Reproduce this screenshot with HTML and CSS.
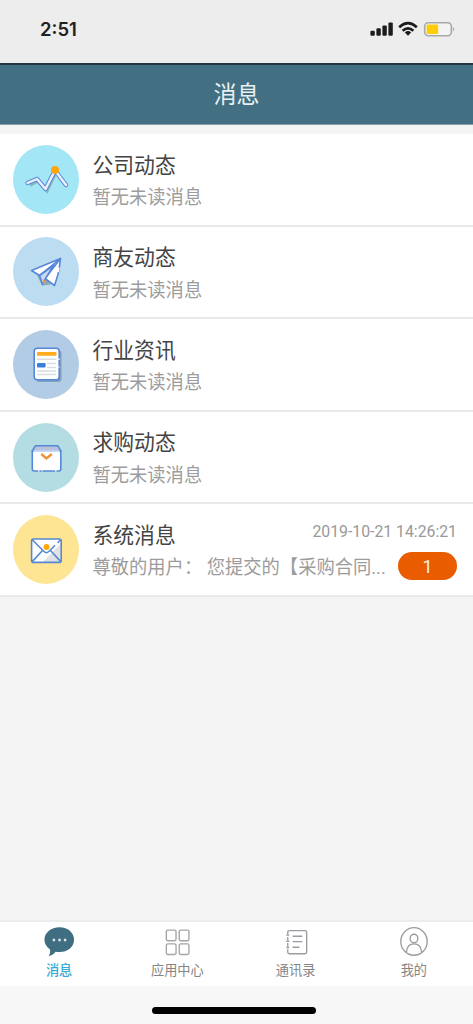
FILE: index.html
```html
<!DOCTYPE html>
<html lang="zh-CN">
  <head>
    <meta charset="utf-8" />
    <title>消息</title>
    <link rel="stylesheet" href="styles.css">
  </head>
  <body>
    <div class="status-bar">
      <span class="time">2:51</span>
      <svg class="status-icons" width="86" height="16" viewBox="0 0 86 16">
        <g fill="#1c1c1c">
          <rect x="0.4" y="9.8" width="4.4" height="5" rx="1.2" />
          <rect x="6.4" y="7.2" width="4.4" height="7.6" rx="1.2" />
          <rect x="12.4" y="4.4" width="4.4" height="10.4" rx="1.2" />
          <rect x="18.4" y="1.4" width="4.4" height="13.4" rx="1.2" />
        </g>
        <g fill="none" stroke="#1c1c1c" stroke-width="2.6">
          <path d="M29.2 6.2 Q38 -1.8 46.8 6.2" />
          <path d="M32.6 9.8 Q38 4.8 43.4 9.8" />
        </g>
        <path d="M34.8 11.4 Q38 8.8 41.2 11.4 L38 14.8 Z" fill="#1c1c1c" />
        <rect x="54.7" y="1.7" width="26.6" height="13" rx="3.6" fill="#f3f3f3" stroke="#a9a9a9" stroke-width="1.6" />
        <rect x="56.6" y="3.6" width="11.6" height="9.4" rx="1.4" fill="#ffcc0a" />
        <path d="M82.8 5.8 Q85.6 8.2 82.8 10.6 Z" fill="#a9a9a9" />
      </svg>
    </div>

    <header class="header"><h1>消息</h1></header>

    <main class="list">
      <div class="item">
        <svg class="avatar" width="66" height="69" viewBox="0 0 66 69">
          <ellipse cx="33" cy="34.5" rx="33" ry="34.5" fill="#a3e6f5" />
          <path d="M17 40.5 L25 36 L34 46 L43 27.5 L53 41" fill="none" stroke="#86b8bd" stroke-width="3" />
          <g fill="none" stroke-linecap="round" stroke-linejoin="round">
            <path d="M14.5 38 L24 34 L32.5 44 L42 25.5 L53 40" stroke="#5889db" stroke-width="4.4" />
            <path d="M14.5 38 L24 34 L32.5 44 L42 25.5 L53 40" stroke="#eef2fc" stroke-width="2.4" />
          </g>
          <circle cx="42" cy="25" r="4" fill="#ffa60e" />
        </svg>
        <div class="info">
          <div class="line"><span class="name">公司动态</span></div>
          <div class="line"><span class="desc">暂无未读消息</span></div>
        </div>
      </div>

      <div class="item">
        <svg class="avatar" width="66" height="69" viewBox="0 0 66 69">
          <ellipse cx="33" cy="34.5" rx="33" ry="34.5" fill="#bcdcf2" />
          <path d="M24 38 L29 48.5 L38 47.5 L31 41 Z" fill="#8caab5" />
          <g fill="#fff" stroke="#5588d8" stroke-width="1.6" stroke-linejoin="round">
            <path d="M47.5 21.5 L18.5 33.5 L26.5 38.5 Z" />
            <path d="M47.5 21.5 L32 41.5 L41.5 48.5 L44.5 39 L46 33 Z" />
            <path d="M41 28 L26.5 38.5 L29.5 47.5 L32.5 41.5 Z" fill="#cbd9f2" />
          </g>
          <path d="M45.7 30.5 L44.9 35" stroke="#fff" stroke-width="2" />
          <path d="M29.5 42 L33 44 L30 47 Z" fill="#f59a3b" />
        </svg>
        <div class="info">
          <div class="line"><span class="name">商友动态</span></div>
          <div class="line"><span class="desc">暂无未读消息</span></div>
        </div>
      </div>

      <div class="item">
        <svg class="avatar" width="66" height="69" viewBox="0 0 66 69">
          <ellipse cx="33" cy="34.5" rx="33" ry="34.5" fill="#b2cce5" />
          <rect x="23" y="20" width="25.5" height="32" rx="3.5" fill="#829fbb" />
          <rect x="21.2" y="18.3" width="25" height="31.4" rx="3" fill="#fff" stroke="#5588d8" stroke-width="1.6" />
          <rect x="24" y="22" width="19.5" height="3.8" rx="0.8" fill="#ffab1c" />
          <path d="M24 29.2 H43.5 M34 33.5 H43 M34 37.5 H43 M24 41 H43 M24 44.5 H43" stroke="#d9dde2" stroke-width="1.5" />
          <rect x="24" y="33" width="8.6" height="4.4" rx="1" fill="#3c7edc" />
          <path d="M46 28.5 V30 M46 36.5 V37.500" stroke="#fff" stroke-width="1.4" />
        </svg>
        <div class="info">
          <div class="line"><span class="name">行业资讯</span></div>
          <div class="line"><span class="desc">暂无未读消息</span></div>
        </div>
      </div>

      <div class="item">
        <svg class="avatar" width="66" height="69" viewBox="0 0 66 69">
          <ellipse cx="33" cy="34.5" rx="33" ry="34.5" fill="#b4dde3" />
          <path d="M19.3 28 L22.3 22.8 H44.8 L47.8 28 Z" fill="#b9c2dc" stroke="#5588d8" stroke-width="1.6" stroke-linejoin="round" />
          <path d="M19.3 28 H47.8 V46 Q47.8 48 45.8 48 H21.3 Q19.3 48 19.3 46 Z" fill="#fff" stroke="#5588d8" stroke-width="1.6" />
          <path d="M20.5 28 H46.6" stroke="#fff" stroke-width="1.2" />
          <path d="M25 47.8 H26.5 M28.5 47.8 H29.5 M42 47.8 H43.5" stroke="#fff" stroke-width="1.4" />
          <path d="M28.2 31 L33.5 35.5 L38.8 31" fill="none" stroke="#ee9235" stroke-width="2.3" />
        </svg>
        <div class="info">
          <div class="line"><span class="name">求购动态</span></div>
          <div class="line"><span class="desc">暂无未读消息</span></div>
        </div>
      </div>

      <div class="item">
        <svg class="avatar" width="66" height="69" viewBox="0 0 66 69">
          <ellipse cx="33" cy="34.5" rx="33" ry="34.5" fill="#fde594" />
          <rect x="18.6" y="24" width="29.6" height="23.4" rx="2" fill="#fff" />
          <path d="M30 47 L47.5 29 V47 Z" fill="#dfe1e5" />
          <g fill="none" stroke="#5588d0" stroke-width="1.6">
            <path d="M19 24.5 L31 36.5 Q33.4 38.7 35.8 36.5 L48 24.5 M19 46.9 L29.5 35.5 M48 46.9 L37.5 35.5" />
            <rect x="18.6" y="24" width="29.6" height="23.4" rx="2" />
          </g>
          <path d="M42 30.3 L44.500 27.800" stroke="#fff" stroke-width="2" />
          <circle cx="33.5" cy="32" r="3" fill="#ffa90e" />
        </svg>
        <div class="info">
          <div class="line">
            <span class="name">系统消息</span>
            <span class="date">2019-10-21 14:26:21</span>
          </div>
          <div class="line">
            <span class="desc">尊敬的用户： 您提交的【采购合同...</span>
            <span class="badge">1</span>
          </div>
        </div>
      </div>
    </main>

    <nav class="tabs">
      <div class="tab active">
        <svg width="32" height="34" viewBox="0 0 32 34">
          <path d="M16.5 4.5 C25 4.5 31.5 10 31.5 17.3 C31.5 24.8 25 30 16.5 30 C15 30 13.7 30 12.5 29.6 C11 31.6 8.5 33.8 5.3 34 C6.8 32 7.2 29.6 6.7 27.4 C3.5 25 1 21.5 1 17.3 C1 10 8 4.5 16.5 4.5 Z" fill="#3f6e82" />
          <path d="M9.5 17.5 H12 M15.3 17.5 H17.8 M21 17.5 H23.5" stroke="#dce8ec" stroke-width="2.4" />
        </svg>
        <span>消息</span>
      </div>
      <div class="tab">
        <svg width="32" height="34" viewBox="0 0 32 34">
          <g fill="none" stroke="#a2a5a8" stroke-width="1.4">
            <rect x="5" y="7.3" width="10" height="11" rx="1.5" />
            <rect x="18.3" y="7.3" width="10" height="11" rx="1.5" />
            <rect x="5" y="21.5" width="10" height="11" rx="1.5" />
            <rect x="18.3" y="21.5" width="10" height="11" rx="1.5" />
          </g>
        </svg>
        <span>应用中心</span>
      </div>
      <div class="tab">
        <svg width="32" height="34" viewBox="0 0 32 34">
          <g fill="none" stroke="#999ca0" stroke-width="1.4">
            <path d="M7.5 12 V9.5 Q7.5 7.8 9.2 7.8 H25.3 Q27 7.8 27 9.5 V30 Q27 31.7 25.3 31.7 H9.2 Q7.5 31.7 7.5 30 V27 M7.5 14.5 V18 M7.5 20.5 V24.5" />
            <path d="M6 12.5 H9 M6 18.8 H9 M6 25.2 H9 M12.5 13.7 H22.5 M12.5 19.2 H22.5 M12.5 25 H19.5" />
          </g>
        </svg>
        <span>通讯录</span>
      </div>
      <div class="tab">
        <svg width="32" height="34" viewBox="0 0 32 34">
          <g fill="none" stroke="#999ca0" stroke-width="1.4">
            <ellipse cx="16" cy="19" rx="13.6" ry="14.2" />
            <ellipse cx="16" cy="16" rx="4" ry="4.4" />
            <path d="M8.2 30.2 C8.5 24.5 11.5 21.5 16 21.5 C20.5 21.5 23.5 24.5 23.8 30.2" />
          </g>
        </svg>
        <span>我的</span>
      </div>
    </nav>

    <div class="home-area"><div class="home-bar"></div></div>
  </body>
</html>
```
FILE: styles.css
```css
body {
  margin: 0;
  height: 1024px;
  display: flex;
  flex-direction: column;
  overflow: hidden;
  background-color: #f4f4f4;
  font-family: Roboto, "Noto Sans CJK SC", sans-serif;
}
.status-bar {
  display: flex;
  justify-content: space-between;
  box-sizing: border-box;
  height: 63px;
  padding: 21px 17px 0 40px;
  background-color: #ededed;
}
.time {
  font-family: Inter, sans-serif;
  font-size: 18.5px;
  line-height: 17px;
  font-weight: 600;
  color: #222;
}
.header {
  box-sizing: border-box;
  height: 62px;
  border-top: 2px solid #26353f;
  border-bottom: 1px solid #8aa0aa;
  background-color: #436f82;
}
.header h1 {
  margin: 0;
  padding-top: 2px;
  font-size: 23px;
  line-height: 58px;
  font-weight: 400;
  color: #e9f0f2;
  text-align: center;
  transform: scaleY(1.05);
}
.list {
  margin-top: 9px;
}
.item {
  display: flex;
  align-items: center;
  gap: 13.5px;
  box-sizing: border-box;
  height: 92.6px;
  padding: 0 16px 0 13px;
  border-bottom: 2px solid #e9e9e9;
  background-color: #fff;
}
.avatar {
  flex: none;
}
.info {
  flex: 1;
  padding-top: 1px;
}
.line {
  display: flex;
  justify-content: space-between;
  align-items: center;
  height: 32.5px;
  white-space: nowrap;
}
.name {
  font-size: 20.8px;
  color: #444;
  transform: scaleY(1.05);
}
.desc {
  font-size: 18.3px;
  color: #9c9c9c;
  transform: scaleY(1.05);
}
.date {
  margin-top: -4px;
  font-size: 15.8px;
  color: #999;
}
.badge {
  width: 59px;
  height: 28px;
  border-radius: 14px;
  background-color: #ea5c00;
  color: #fbeee4;
  font-size: 18px;
  line-height: 29px;
  text-align: center;
}
/* bottom navigation */
.tabs {
  display: flex;
  box-sizing: border-box;
  height: 66px;
  margin-top: auto;
  border-top: 2px solid #ececec;
  background-color: #fff;
}
.tab {
  flex: 1;
  display: flex;
  flex-direction: column;
  align-items: center;
  padding-top: 1px;
  font-size: 13.2px;
  line-height: 30px;
  color: #858585;
}
.tab span {
  transform: scaleY(1.05);
}
.active {
  color: #35abd6;
  font-weight: 500;
}
.home-area {
  display: flex;
  justify-content: center;
  box-sizing: border-box;
  height: 38px;
  padding: 21px 5px 0 0;
  background-color: #f7f7f7;
}
.home-bar {
  width: 164px;
  height: 7px;
  border-radius: 4px;
  background-color: #000;
}
```
